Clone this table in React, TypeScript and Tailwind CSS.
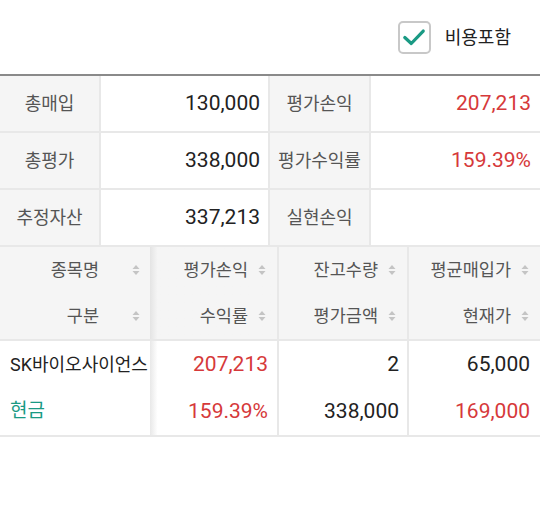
import React from "react";

const red = "text-[#d6393a]";

function SortIcon() {
  return (
    <svg width="8" height="12" viewBox="0 0 8 12" className="shrink-0">
      <path d="M4 1 L7.5 5 H0.5 Z" fill="#c4c4c4" />
      <path d="M4 11 L7.5 7 H0.5 Z" fill="#c4c4c4" />
    </svg>
  );
}

function SummaryRow({ a, av, b, bv, red1, red2 }: { a: string; av: string; b: string; bv: string; red1?: boolean; red2?: boolean }) {
  return (
    <div className="grid grid-cols-[101px_169px_101px_169px] h-[57px] border-b-2 border-[#e8e8e8]">
      <div className="flex items-center justify-center bg-[#f5f5f5] border-r-2 border-[#e8e8e8] text-[18px] text-[#555]">{a}</div>
      <div className={`flex items-center justify-end pr-[8px] text-[21px] border-r-2 border-[#e8e8e8] ${red1 ? red : "text-[#222]"}`}>{av}</div>
      <div className="flex items-center justify-center bg-[#f5f5f5] border-r-2 border-[#e8e8e8] text-[18px] text-[#555]">{b}</div>
      <div className={`flex items-center justify-end pr-[9px] text-[21px] ${red2 ? red : "text-[#222]"}`}>{bv}</div>
    </div>
  );
}

function HeadCell({ label, first }: { label: string; first?: boolean }) {
  return (
    <div className={`flex items-center justify-end h-[46px] text-[17.5px] text-[#555] ${first ? "pr-[10px] gap-[33px]" : "pr-[11px] gap-[10px]"}`}>
      <span>{label}</span>
      <SortIcon />
    </div>
  );
}

export default function App() {
  return (
    <main
      className="w-[540px] h-[507px] bg-white overflow-hidden"
      style={{ fontFamily: "Roboto, 'Noto Sans CJK KR', sans-serif" }}
    >
      <header className="h-[76px] flex items-center justify-end pr-[29px] gap-[14px] border-b-2 border-[#8a8a8a]">
        <div className="w-[33px] h-[33px] rounded-[5px] border-2 border-[#c8c8c8] flex items-center justify-center">
          <svg width="26" height="26" viewBox="0 0 24 24">
            <path d="M3.5 12.5 L9.5 18 L20.5 6.5" fill="none" stroke="#1a9a84" strokeWidth="3" strokeLinecap="round" strokeLinejoin="round" />
          </svg>
        </div>
        <span className="text-[18px] text-[#222]">비용포함</span>
      </header>

      <SummaryRow a="총매입" av="130,000" b="평가손익" bv="207,213" red2 />
      <SummaryRow a="총평가" av="338,000" b="평가수익률" bv="159.39%" red2 />
      <SummaryRow a="추정자산" av="337,213" b="실현손익" bv="" />

      <div className="grid grid-cols-[150px_129px_130px_131px] bg-[#f5f5f5] border-b-2 border-[#e8e8e8]">
        <div className="flex flex-col">
          <HeadCell label="종목명" first />
          <HeadCell label="구분" first />
        </div>
        <div className="flex flex-col bg-gradient-to-r from-[#e4e4e4] via-[#f5f5f5] via-[6%] to-[#f5f5f5] border-r-2 border-[#e8e8e8]">
          <HeadCell label="평가손익" />
          <HeadCell label="수익률" />
        </div>
        <div className="flex flex-col border-r-2 border-[#e8e8e8]">
          <HeadCell label="잔고수량" />
          <HeadCell label="평가금액" />
        </div>
        <div className="flex flex-col">
          <HeadCell label="평균매입가" />
          <HeadCell label="현재가" />
        </div>
      </div>

      <div className="grid grid-cols-[150px_129px_130px_131px] border-b-2 border-[#e8e8e8] text-[21px]">
        <div className="flex flex-col pl-[10px]">
          <div className="h-[47px] flex items-center text-[18px] text-[#222] whitespace-nowrap">SK바이오사이언스</div>
          <div className="h-[47px] flex items-center text-[19px] text-[#1a9a84]">현금</div>
        </div>
        <div className="flex flex-col items-end pr-[9px] bg-gradient-to-r from-[#e8e8e8] via-white via-[6%] to-white border-r-2 border-[#e8e8e8]">
          <div className={`h-[47px] flex items-center ${red}`}>207,213</div>
          <div className={`h-[47px] flex items-center ${red}`}>159.39%</div>
        </div>
        <div className="flex flex-col items-end pr-[8px] border-r-2 border-[#e8e8e8] text-[#222]">
          <div className="h-[47px] flex items-center">2</div>
          <div className="h-[47px] flex items-center">338,000</div>
        </div>
        <div className="flex flex-col items-end pr-[10px]">
          <div className="h-[47px] flex items-center text-[#222]">65,000</div>
          <div className={`h-[47px] flex items-center ${red}`}>169,000</div>
        </div>
      </div>
    </main>
  );
}
